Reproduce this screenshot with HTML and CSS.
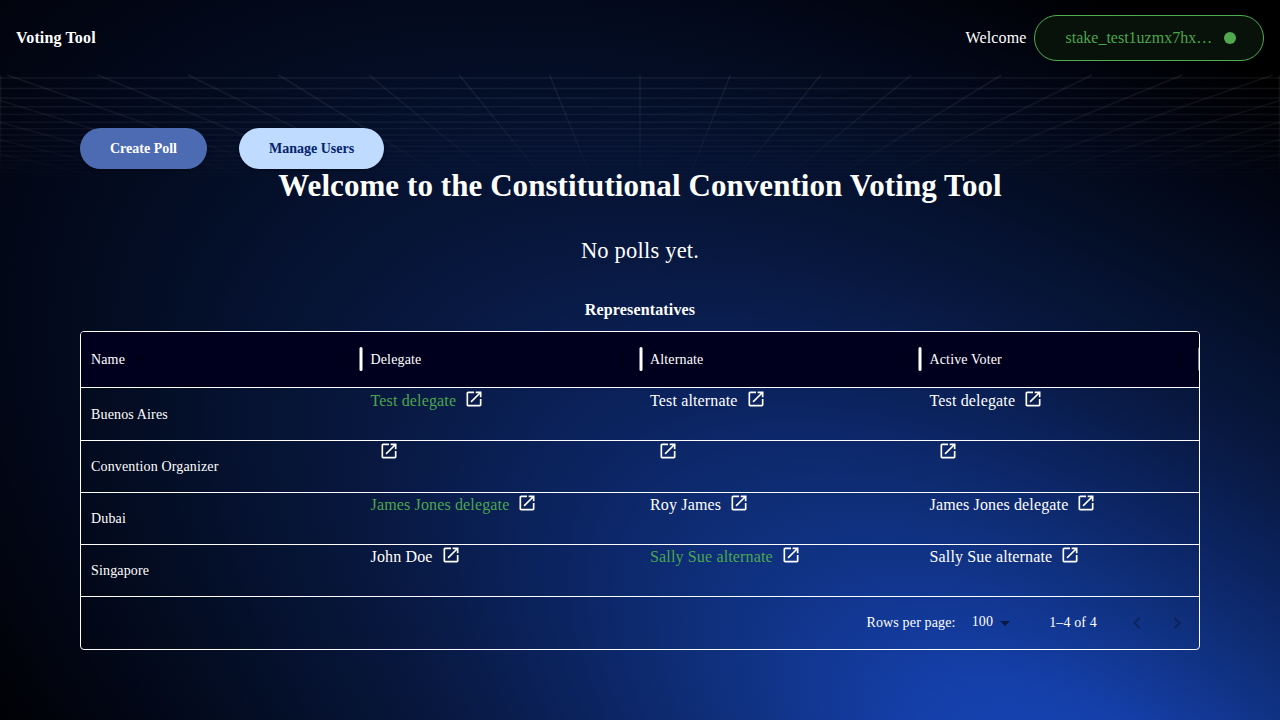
FILE: index.html
```html
<!DOCTYPE html>
<html lang="en">
<head>
<meta charset="utf-8">
<title>Voting Tool</title>
<link rel="stylesheet" href="styles.css">
</head>
<body>
<svg class="backdrop" width="1280" height="720" viewBox="0 0 1280 720" aria-hidden="true">
  <defs>
    <radialGradient id="glow" gradientUnits="userSpaceOnUse" cx="0" cy="0" r="1" gradientTransform="translate(1095 820) rotate(34) scale(1500 720)">
      <stop offset="0" stop-color="#1646bc"/>
      <stop offset=".13" stop-color="#1540ab"/>
      <stop offset=".28" stop-color="#103180"/>
      <stop offset=".42" stop-color="#0b235e"/>
      <stop offset=".55" stop-color="#081840"/>
      <stop offset=".7" stop-color="#040f29"/>
      <stop offset=".86" stop-color="#020614"/>
      <stop offset="1" stop-color="#000001"/>
    </radialGradient>
    <linearGradient id="fade" gradientUnits="userSpaceOnUse" x1="0" y1="75" x2="0" y2="180">
      <stop offset="0" stop-color="#fff" stop-opacity=".065"/>
      <stop offset=".5" stop-color="#fff" stop-opacity=".045"/>
      <stop offset="1" stop-color="#fff" stop-opacity="0"/>
    </linearGradient>
  </defs>
  <rect width="1280" height="720" fill="url(#glow)"/>
  <g id="grid" fill="none" stroke="url(#fade)" stroke-width="1.5"></g>
</svg>
<header class="topbar">
  <div class="brand">Voting Tool</div>
  <div class="account">
    <span>Welcome</span>
    <div class="wallet"><span>stake_test1uzmx7hx…</span><i class="dot"></i></div>
  </div>
</header>
<main class="page">
  <div class="actions">
    <button class="btn btn-primary">Create Poll</button>
    <button class="btn btn-light">Manage Users</button>
  </div>
  <h1 class="title">Welcome to the Constitutional Convention Voting Tool</h1>
  <p class="empty">No polls yet.</p>
  <h2 class="subtitle">Representatives</h2>
  <section class="table">
    <div class="head" id="head"></div>
    <div id="rows"></div>
    <div class="foot">
      <span class="rpp">Rows per page:</span>
      <span class="count">100</span>
      <svg class="caret" viewBox="0 0 24 24"><path d="M7 10l5 5 5-5z"/></svg>
      <span class="range">1–4 of 4</span>
      <svg class="nav" viewBox="0 0 24 24"><path d="M15.41 7.41 14 6l-6 6 6 6 1.41-1.41L10.83 12z"/></svg>
      <svg class="nav" viewBox="0 0 24 24"><path d="M10 6 8.59 7.41 13.17 12l-4.58 4.59L10 18l6-6z"/></svg>
    </div>
  </section>
</main>
<script src="app.js"></script>
</body>
</html>
```
FILE: styles.css
```css
* { box-sizing: border-box; }
body {
  margin: 0;
  width: 1280px;
  height: 720px;
  overflow: hidden;
  background: #000;
  color: #fff;
  font-family: "Liberation Serif", serif;
  font-size: 16px;
  line-height: 24px;
  letter-spacing: 0.15px;
}
.backdrop { position: absolute; inset: 0; z-index: -1; display: block; }
.topbar {
  display: flex;
  justify-content: space-between;
  align-items: center;
  height: 75px;
  padding: 1px 16px 0;
}
.brand { font-weight: 700; }
.account { display: flex; align-items: center; gap: 7.5px; }
.wallet {
  display: flex;
  align-items: center;
  justify-content: space-between;
  width: 230px;
  height: 46px;
  padding: 0 27px 0 30.5px;
  border: 1px solid #4caf50;
  border-radius: 23px;
  background: #08110a;
  color: #4ca64f;
  letter-spacing: 0;
}
.dot { width: 12px; height: 12px; border-radius: 50%; background: #50a850; }
.page { padding: 53px 80px 0; }
.actions { display: flex; gap: 32px; }
.btn {
  height: 41px;
  padding: 0 30px;
  border: 0;
  border-radius: 20.5px;
  font: 700 14px/20px "Liberation Serif", serif;
  white-space: nowrap;
  box-shadow: 0 2px 3px rgba(0, 0, 0, .3);
}
.btn-primary { background: #4d6bb3; color: #fff; width: 127px; }
.btn-light { background: #bfdbff; color: #03246e; width: 145px; }
.title { margin: 0; text-align: center; font-size: 31px; line-height: 33px; letter-spacing: .07px; }
.empty { margin: 33px 0 0; text-align: center; font-size: 22.5px; line-height: 32px; letter-spacing: .2px; }
.subtitle { margin: 31px 0 9px; text-align: center; font-size: 16px; line-height: 24px; }
.table { height: 319px; border: 1px solid #fff; border-radius: 4px; overflow: hidden; }
.head, .row { display: grid; grid-template-columns: repeat(4, 279.5px); }
.head { height: 56px; background: #00001e; border-bottom: 1px solid #fff; }
.hcell {
  display: flex;
  align-items: center;
  padding-left: 10px;
  font-size: 14px;
}
.sort { width: 18px; height: 18px; margin-left: 7px; fill: #00000f; }
.more { width: 18px; height: 18px; margin-left: auto; margin-right: 8px; fill: #00000f; }
.sep { flex: none; width: 4px; height: 24px; margin: 0 -2.5px 1px 0; fill: #fff; }
.row { height: 52px; border-top: 1px solid #fff; }
.row:first-child { border-top-color: transparent; }
.name { padding-left: 10px; font-size: 14px; line-height: 51px; }
.person { display: flex; align-items: flex-start; padding-left: 10px; line-height: 23px; white-space: nowrap; }
.picked { color: #4ca64f; }
.open { width: 20px; height: 20px; margin-left: 8px; fill: #fff; }
.foot {
  display: flex;
  align-items: center;
  justify-content: flex-end;
  height: 53px;
  padding-right: 10px;
  border-top: 1px solid #fff;
  font-size: 14px;
}
.count { margin: -2px 0 0 16px; }
.caret { width: 24px; height: 24px; fill: rgba(0, 0, 0, .54); }
.range { margin: 0 28px 0 32px; }
.nav { width: 24px; height: 24px; fill: rgba(0, 0, 0, .28); }
.nav + .nav { margin-left: 16px; }
```
FILE: app.js
```js
const NS = 'http://www.w3.org/2000/svg';
const grid = document.getElementById('grid');
function line(d) {
  const p = document.createElementNS(NS, 'path');
  p.setAttribute('d', d);
  grid.appendChild(p);
}
[78, 88.6, 98.3, 106.8, 114.6, 122.3, 128.7, 135, 140.5, 146.3, 151.3, 155.9, 160.4, 164.5, 168.5, 172.3, 176]
  .forEach(y => line(`M0 ${y}H1280`));
for (let k = -16; k <= 16; k++) {
  line(`M${640 + k * 90.4} 75L${640 + k * 90.4 * 117 / 222} 180`);
}
line('M.5 75V180');
line('M1279.5 75V180');

const more = '<svg class="more" viewBox="0 0 24 24"><path d="M12 8c1.1 0 2-.9 2-2s-.9-2-2-2-2 .9-2 2 .9 2 2 2m0 2c-1.1 0-2 .9-2 2s.9 2 2 2 2-.9 2-2-.9-2-2-2m0 6c-1.1 0-2 .9-2 2s.9 2 2 2 2-.9 2-2-.9-2-2-2"/></svg>';
const sort = '<svg class="sort" viewBox="0 0 24 24"><path d="m4 12 1.41 1.41L11 7.83V20h2V7.83l5.58 5.59L20 12l-8-8z"/></svg>';
const open = '<svg class="open" viewBox="0 0 24 24"><path d="M19 19H5V5h7V3H5c-1.11 0-2 .9-2 2v14c0 1.1.89 2 2 2h14c1.1 0 2-.9 2-2v-7h-2zM14 3v2h3.59l-9.83 9.83 1.41 1.41L19 6.41V10h2V3z"/></svg>';
const sep = '<svg class="sep" viewBox="0 0 4 24"><rect x=".5" width="3" height="24" rx="1.5"/></svg>';
document.getElementById('head').innerHTML = ['Name', 'Delegate', 'Alternate', 'Active Voter']
  .map((t, i) => `<div class="hcell"><span>${t}</span>${i ? '' : sort}${more}${sep}</div>`).join('');
const data = [
  ['Buenos Aires', 'Test delegate', 'Test alternate', 'Test delegate', 1],
  ['Convention Organizer', '', '', '', 0],
  ['Dubai', 'James Jones delegate', 'Roy James', 'James Jones delegate', 1],
  ['Singapore', 'John Doe', 'Sally Sue alternate', 'Sally Sue alternate', 2]
];
document.getElementById('rows').innerHTML = data.map(r =>
  `<div class="row"><div class="name">${r[0]}</div>` +
  [1, 2, 3].map(c => `<div class="person${r[4] === c ? ' picked' : ''}"><span>${r[c]}</span>${open}</div>`).join('') +
  '</div>').join('');
```
